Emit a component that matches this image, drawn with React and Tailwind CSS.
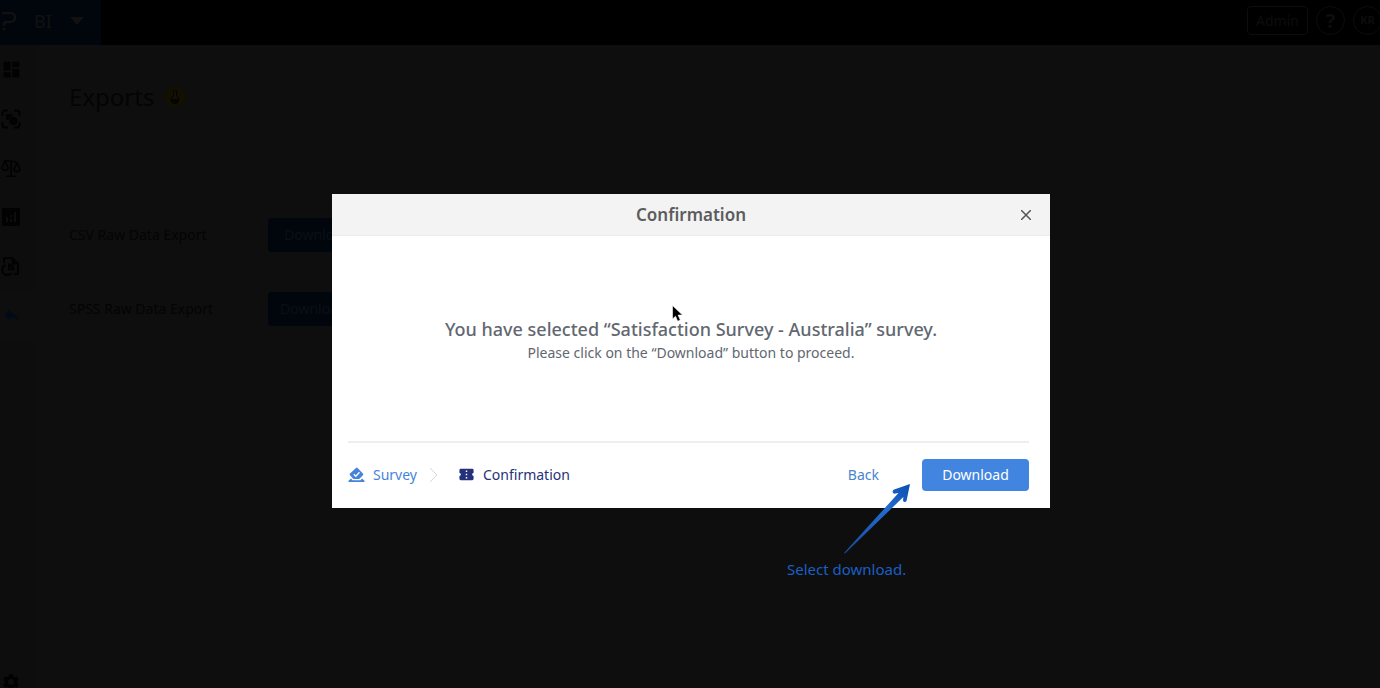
import React from "react";
import { MdDashboard, MdAnalytics, MdReply, MdSettings, MdConfirmationNumber } from "react-icons/md";

function Logo() {
  return (
    <svg viewBox="0 0 14 20" className="h-5 w-3.5" fill="none" stroke="currentColor" strokeWidth="2.600" aria-hidden="true">
      <path d="M0 2h8.500a4.200 4.200 0 0 1 0 9H4.500A2.500 2.500 0 0 0 2 13.500V15" />
      <path d="M.7 18h2.600" />
    </svg>
  );
}

function FocusIcon() {
  return (
    <svg viewBox="0 0 20 20" className="size-5" aria-hidden="true">
      <path d="M1.500 7V4.500a3 3 0 0 1 3-3H7M13 1.500h2.500a3 3 0 0 1 3 3V7M18.500 13v2.500a3 3 0 0 1-3 3H13M7 18.500H4.500a3 3 0 0 1-3-3V13" fill="none" stroke="currentColor" strokeWidth="2" />
      <path d="M5 5h6.500v2.500A5 5 0 0 0 7.500 11H5z" fill="currentColor" />
      <circle cx="12.500" cy="12" r="4" fill="currentColor" />
    </svg>
  );
}

function ScaleIcon() {
  return (
    <svg viewBox="0 0 20 20" className="size-5" fill="none" stroke="currentColor" strokeWidth="1.600" strokeLinejoin="round" aria-hidden="true">
      <path d="M3 3c5-.8 9 .2 14 2M10 3v15M5 18.200h10" />
      <path d="M4 3 1.200 9.500M4 3l3 6.500M1 9.300a3.100 3.100 0 0 0 6.200 0M16 5l-3 6M16 5l3 6M12.800 10.500a3.100 3.100 0 0 0 6.200 0" />
    </svg>
  );
}

function FileChartIcon() {
  return (
    <svg viewBox="0 0 20 20" className="size-5" fill="none" stroke="currentColor" strokeWidth="2" aria-hidden="true">
      <path d="M3 7V3.500A1.500 1.500 0 0 1 4.500 2H11l6 6v8.500a1.500 1.500 0 0 1-1.500 1.500H13" />
      <path d="M11 2v6h6z" fill="currentColor" strokeWidth="1" />
      <path d="M4.500 9a5.200 5.200 0 1 0 6 8M8 8.500v4.800h4.500A4.600 4.600 0 0 0 8 8.500z" />
    </svg>
  );
}

function SurveyIcon() {
  return (
    <svg viewBox="0 0 17 16" className="h-4 w-[17px]" aria-hidden="true">
      <path d="M8 .9 2 6.600a1.200 1.200 0 0 0 0 1.700l3.200 3.400a1 1 0 0 0 .8.300h4.700a1 1 0 0 0 .8-.3l3.400-3.400a1.200 1.200 0 0 0 0-1.700L9.600.9a1.200 1.200 0 0 0-1.600 0z" fill="currentColor" />
      <path d="M3 11.500.5 13.800V15h16v-1.200L14 11.500l-1.500 1.700h-8z" fill="currentColor" />
      <path d="m5.800 7.200 2 2 3.700-4" fill="none" stroke="white" strokeWidth="1.300" />
    </svg>
  );
}

const nav = [
  ["Dashboard", <MdDashboard size={21} />],
  ["Segments", <FocusIcon />],
  ["Weighting", <ScaleIcon />],
  ["Analytics", <MdAnalytics size={24} className="shrink-0" />],
  ["Reports", <FileChartIcon />],
];

function TopBar() {
  return (
    <header className="flex h-[45px] items-center justify-between bg-black text-[#111111]">
      <button type="button" className="flex h-full w-[101px] items-center bg-[#01060d] pb-1 pl-0.5">
        <Logo />
        <span className="ml-[18px] w-9 text-left text-lg">BI</span>
        <svg viewBox="0 0 14 8" className="h-2 w-3.5" fill="currentColor" aria-hidden="true"><path d="M0 0h14L7 8z" /></svg>
      </button>
      <div className="-mr-0.5 flex items-center gap-2 pb-1 text-[#0d0d0d]">
        <button type="button" className="h-[29px] w-[61px] rounded border border-current text-sm">Admin</button>
        <button type="button" aria-label="Help" className="size-[29px] rounded-full border border-current text-xl font-bold leading-none">?</button>
        <button type="button" className="size-[29px] rounded-full border border-current text-[11px] font-bold">KR</button>
      </div>
    </header>
  );
}

function Sidebar() {
  return (
    <nav className="flex w-9 shrink-0 flex-col bg-[#0d0d0d] text-[#020202]">
      {nav.map(([label, icon]) => (
        <button key={label} type="button" aria-label={label} className="flex h-[49px] w-[22px] items-center justify-center">{icon}</button>
      ))}
      <button type="button" aria-label="Exports" className="flex h-[50px] items-center bg-[#0e0e0e] pl-0.5 text-[#020a15]"><MdReply size={20} /></button>
      <button type="button" aria-label="Settings" className="mt-auto flex h-3 w-[22px] items-center justify-center"><MdSettings size={20} className="shrink-0" /></button>
    </nav>
  );
}

function ExportRow({ label, wide }) {
  return (
    <div className="flex h-[34px] items-center">
      <span className="w-[199px] text-sm">{label}</span>
      <button type="button" className={`h-full w-[107px] rounded-sm bg-[#01060d] text-left text-sm text-[#0b0f16] ${wide ? "pl-3" : "pl-4"}`}>Download</button>
    </div>
  );
}

function Arrow() {
  return (
    <svg viewBox="0 0 68 72" className="ml-[57px] h-[72px] w-[68px]" aria-hidden="true">
      <defs>
        <linearGradient id="arrow" x1="0" y1="1" x2="1" y2="0">
          <stop offset="0" stopColor="#144a9c" />
          <stop offset=".65" stopColor="#226bd0" />
          <stop offset="1" stopColor="#0b4fb0" />
        </linearGradient>
      </defs>
      <path d="M0 70 54.500 10 50 10.800q-2.500-1.800-.5-4L66 1l-3.500 17q-1.500 2-3.500 0l.3-4L1 70.500z" fill="url(#arrow)" />
    </svg>
  );
}

function ConfirmationDialog() {
  return (
    <div role="dialog" aria-labelledby="dialog-title" className="relative w-[718px] max-w-full bg-white">
      <div className="flex h-[42px] items-center border-b border-[#ebebeb] bg-[#f3f3f3] px-4">
        <span className="w-4" />
        <h2 id="dialog-title" className="flex-1 text-center text-[17px] font-semibold text-[#5c5c5c]">Confirmation</h2>
        <button type="button" aria-label="Close" className="flex size-4 items-center justify-center text-[#555555]">
          <svg viewBox="0 0 10 10" className="size-2.5" stroke="currentColor" strokeWidth="1.500" aria-hidden="true"><path d="m0 0 10 10M10 0 0 10" /></svg>
        </button>
      </div>
      <div className="flex h-[205px] flex-col items-center justify-center text-[#626770]">
        <p className="text-lg font-medium leading-7">You have selected “Satisfaction Survey - Australia” survey.</p>
        <p className="text-sm leading-5">Please click on the “Download” button to proceed.</p>
      </div>
      <div className="ml-4 mr-[21px] flex h-[67px] items-center border-t-2 border-[#eeeeee] pb-0.5 text-sm">
        <ol className="flex items-center">
          <li><a href="#survey" className="flex items-center gap-2 text-[#4684db]"><SurveyIcon />Survey</a></li>
          <li aria-hidden="true" className="ml-3 mr-5">
            <svg viewBox="0 0 9 14" className="h-3.5 w-[9px]" fill="none" stroke="#d4d4d4"><path d="m1 0 7 7-7 7" /></svg>
          </li>
          <li className="flex items-center gap-2 text-[#25317b]"><MdConfirmationNumber size={17} />Confirmation</li>
        </ol>
        <button type="button" className="ml-auto mr-[43px] text-[#4a86cf]">Back</button>
        <button type="button" className="h-8 w-[107px] rounded-sm bg-[#4285e0] text-white">Download</button>
      </div>
      <svg viewBox="0 0 12 17" className="absolute left-[340px] top-[111px] h-[17px] w-3" aria-hidden="true">
        <path d="M.5.500v13.500l3-2.800 2.200 5 2.600-1.100-2.200-5h4.400z" fill="black" stroke="white" strokeWidth=".6" />
      </svg>
      <div className="absolute right-[133px] top-[289px] w-[130px] text-[#1b5fc4]">
        <Arrow />
        <p className="mt-0.5 text-[15px] leading-6">Select download.</p>
      </div>
    </div>
  );
}

export default function App() {
  return (
    <div className="relative flex min-h-screen flex-col overflow-hidden bg-[#0e0e0e] font-['Noto_Sans',sans-serif]">
      <TopBar />
      <div className="flex flex-1">
        <Sidebar />
        <main className="flex-1 pl-[33px] pt-9 text-[#040404]">
          <div className="flex h-8 items-center gap-2.5">
            <h1 className="text-2xl">Exports</h1>
            <span className="flex size-[22px] items-center justify-center rounded-full bg-[#111002]">
              <svg viewBox="0 0 10 14" className="h-3.5 w-2.5" fill="none" stroke="currentColor" aria-hidden="true">
                <path d="M3.500 1v5a4 4 0 1 0 3 0V1M2.500 1h5" /><path d="M1.500 9.500h7a3.500 3 0 0 1-7 0z" fill="currentColor" />
              </svg>
            </span>
          </div>
          <div className="mt-[105px] flex flex-col gap-10">
            <ExportRow label="CSV Raw Data Export" />
            <ExportRow label="SPSS Raw Data Export" wide />
          </div>
        </main>
      </div>
      <div className="absolute inset-0 flex items-start justify-center pl-0.5 pt-[194px]">
        <ConfirmationDialog />
      </div>
    </div>
  );
}
